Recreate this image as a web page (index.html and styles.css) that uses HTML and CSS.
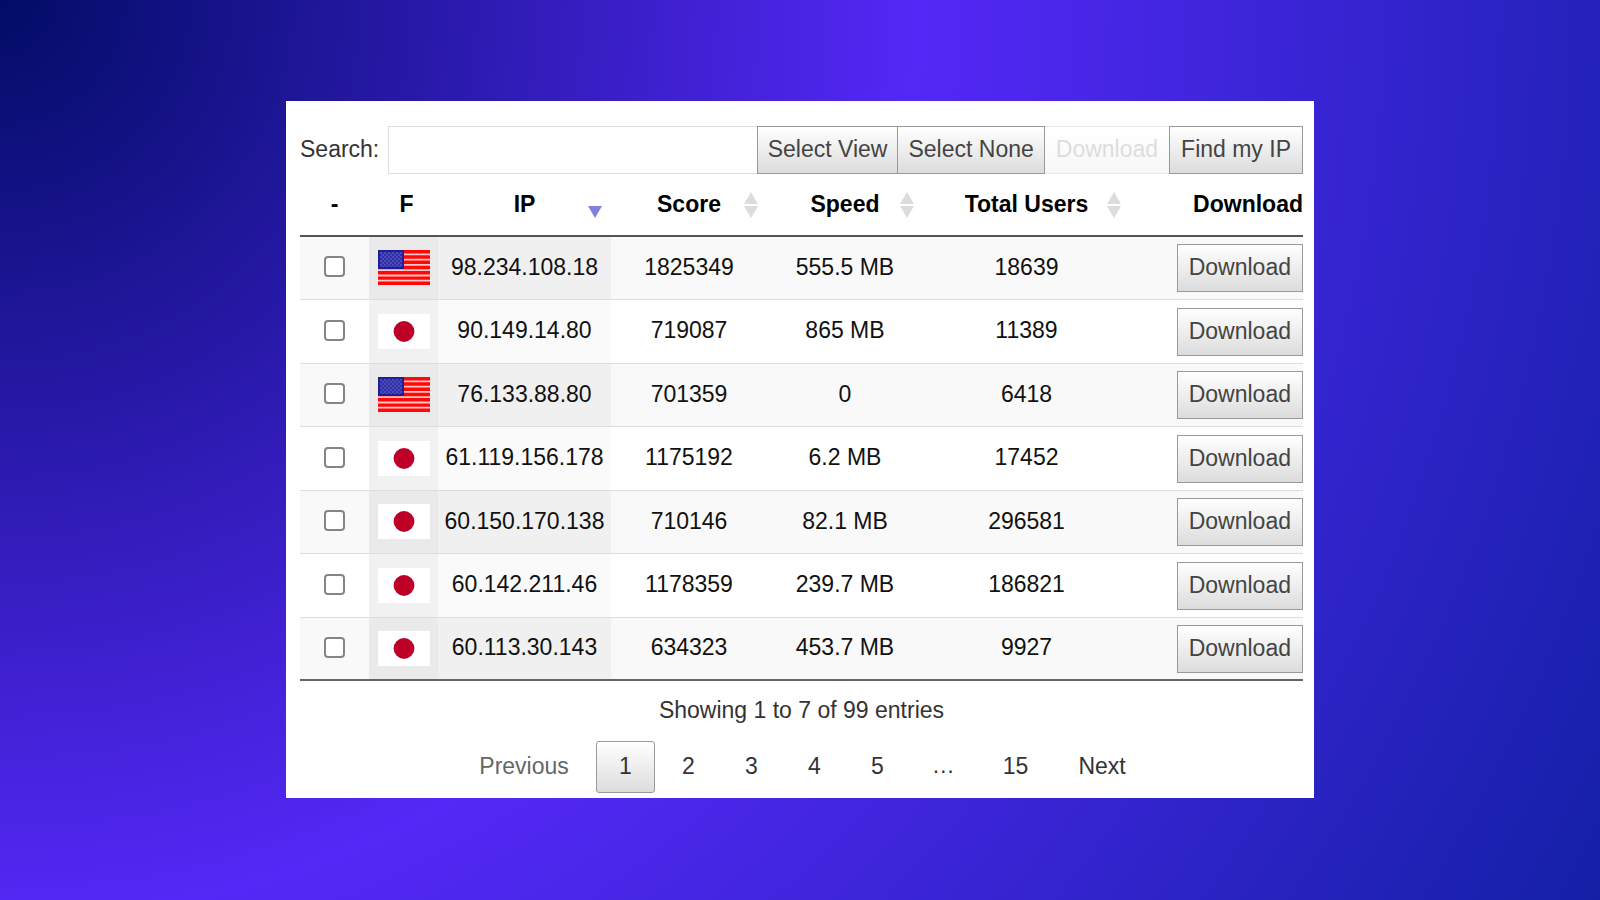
FILE: index.html
```
<!DOCTYPE html>
<html lang="en">
<head>
<meta charset="utf-8">
<title>Server list</title>
<link rel="stylesheet" href="styles.css">
</head>
<body>
<svg class="defs" aria-hidden="true">
  <defs>
    <pattern id="stars" width="4" height="4" patternUnits="userSpaceOnUse">
      <rect width="4" height="4" fill="#2e2ea8"/>
      <rect width="2" height="2" fill="#4c4cb6"/>
      <rect x="2" y="2" width="2" height="2" fill="#4c4cb6"/>
    </pattern>
    <symbol id="flag-us" viewBox="0 0 52 35">
      <rect width="52" height="35" fill="#ffc4c4"/>
      <path d="M0 1.8H52M0 7H52M0 12.3H52M0 17.5H52M0 22.8H52M0 28.1H52M0 33.3H52" stroke="#ff0808" stroke-width="3.4"/>
      <rect width="26" height="19" fill="#1c1c9c"/>
      <rect x="2" y="2" width="22" height="15" fill="url(#stars)"/>
    </symbol>
    <symbol id="flag-jp" viewBox="0 0 52 35">
      <rect width="52" height="35" fill="#fff"/>
      <circle cx="26" cy="17.5" r="10.4" fill="#be0029"/>
    </symbol>
    <symbol id="sort-both" viewBox="0 0 14 26">
      <path d="M7 0L14 12H0ZM0 14H14L7 26Z" fill="#dcdcdc"/>
    </symbol>
    <symbol id="sort-down" viewBox="0 0 14 26">
      <path d="M0 14H14L7 26Z" fill="#8080e0"/>
    </symbol>
  </defs>
</svg>
<main class="card">
  <form class="toolbar">
    <label class="search-label" for="search">Search:</label>
    <input class="search" id="search" type="search">
    <button class="btn btn-select" type="button">Select View</button>
    <button class="btn btn-select btn-joined" type="button">Select None</button>
    <button class="btn" type="button" disabled>Download</button>
    <button class="btn" type="button">Find my IP</button>
  </form>
  <table class="servers">
    <colgroup>
      <col class="col-flag"><col class="col-flag"><col class="col-ip"><col class="col-num"><col class="col-num"><col class="col-users"><col>
    </colgroup>
    <thead>
      <tr>
        <th>-</th>
        <th class="head-flag">F</th>
        <th>IP<svg class="sort"><use href="#sort-down"/></svg></th>
        <th>Score<svg class="sort"><use href="#sort-both"/></svg></th>
        <th>Speed<svg class="sort"><use href="#sort-both"/></svg></th>
        <th>Total Users<svg class="sort"><use href="#sort-both"/></svg></th>
        <th class="action">Download</th>
      </tr>
    </thead>
    <tbody>
      <tr><td><input class="check" type="checkbox" aria-label="Select 98.234.108.18"></td><td class="flag-cell"><svg class="flag"><use href="#flag-us"/></svg></td><td class="ip">98.234.108.18</td><td>1825349</td><td>555.5 MB</td><td>18639</td><td class="action"><button class="btn" type="button">Download</button></td></tr>
      <tr><td><input class="check" type="checkbox" aria-label="Select 90.149.14.80"></td><td class="flag-cell"><svg class="flag"><use href="#flag-jp"/></svg></td><td class="ip">90.149.14.80</td><td>719087</td><td>865 MB</td><td>11389</td><td class="action"><button class="btn" type="button">Download</button></td></tr>
      <tr><td><input class="check" type="checkbox" aria-label="Select 76.133.88.80"></td><td class="flag-cell"><svg class="flag"><use href="#flag-us"/></svg></td><td class="ip">76.133.88.80</td><td>701359</td><td>0</td><td>6418</td><td class="action"><button class="btn" type="button">Download</button></td></tr>
      <tr><td><input class="check" type="checkbox" aria-label="Select 61.119.156.178"></td><td class="flag-cell"><svg class="flag"><use href="#flag-jp"/></svg></td><td class="ip">61.119.156.178</td><td>1175192</td><td>6.2 MB</td><td>17452</td><td class="action"><button class="btn" type="button">Download</button></td></tr>
      <tr><td><input class="check" type="checkbox" aria-label="Select 60.150.170.138"></td><td class="flag-cell"><svg class="flag"><use href="#flag-jp"/></svg></td><td class="ip">60.150.170.138</td><td>710146</td><td>82.1 MB</td><td>296581</td><td class="action"><button class="btn" type="button">Download</button></td></tr>
      <tr><td><input class="check" type="checkbox" aria-label="Select 60.142.211.46"></td><td class="flag-cell"><svg class="flag"><use href="#flag-jp"/></svg></td><td class="ip">60.142.211.46</td><td>1178359</td><td>239.7 MB</td><td>186821</td><td class="action"><button class="btn" type="button">Download</button></td></tr>
      <tr><td><input class="check" type="checkbox" aria-label="Select 60.113.30.143"></td><td class="flag-cell"><svg class="flag"><use href="#flag-jp"/></svg></td><td class="ip">60.113.30.143</td><td>634323</td><td>453.7 MB</td><td>9927</td><td class="action"><button class="btn" type="button">Download</button></td></tr>
    </tbody>
  </table>
  <p class="info">Showing 1 to 7 of 99 entries</p>
  <nav class="pager" aria-label="Pages">
    <a class="page page-off">Previous</a>
    <a class="page page-current" href="#">1</a>
    <a class="page" href="#">2</a>
    <a class="page" href="#">3</a>
    <a class="page" href="#">4</a>
    <a class="page" href="#">5</a>
    <span class="gap">…</span>
    <a class="page" href="#">15</a>
    <a class="page" href="#">Next</a>
  </nav>
</main>
</body>
</html>
```
FILE: styles.css
```
* { box-sizing: border-box; }

body {
  margin: 0;
  min-height: 100vh;
  padding: 101px 286px;
  background: radial-gradient(circle at top left, #020c66, #5428f6 50%, #1320a6);
  font-family: Arial, "Liberation Sans", sans-serif;
  font-size: 23px;
  line-height: 30px;
  color: #333;
}

.defs { position: absolute; width: 0; height: 0; }

.card {
  padding: 25px 11px 5px 14px;
  background: #fff;
}

.toolbar { display: flex; align-items: center; }

.search-label { margin-right: 9px; padding-bottom: 2px; }

.search {
  flex: 1;
  min-width: 0;
  height: 48px;
  padding: 0 8px;
  border: 1px solid #ddd;
  border-right: 0;
  background: #fff;
  font: inherit;
}

.btn {
  height: 48px;
  padding: 0 11px 2px;
  border: 1px solid #999;
  background: linear-gradient(#fff, #dcdcdc);
  color: #444;
  font: inherit;
  white-space: nowrap;
}

.btn-select { padding: 0 10px 2px; }

.btn-joined { border-left: 0; }

.btn:disabled {
  border-color: #e8e8e8;
  border-width: 1px 0;
  background: linear-gradient(#fff, #f7f7f7);
  color: #ddd;
}

.servers {
  width: 100%;
  table-layout: fixed;
  border-spacing: 0;
  border-bottom: 2px solid #666;
  color: #111;
}

.col-flag { width: 69px; }
.col-ip { width: 173px; }
.col-num { width: 156px; }
.col-users { width: 207px; }

th {
  position: relative;
  height: 63px;
  padding: 0 0 2px;
  border-bottom: 2px solid #555;
  color: #000;
}

.head-flag { padding-left: 6px; }

td {
  height: 63px;
  padding: 0 0 3px;
  text-align: center;
  background: #fff;
}

tbody tr:nth-child(even) td { height: 64px; }
tbody tr:first-child td,
tbody tr:last-child td { height: 62px; }
tbody tr + tr td { border-top: 1px solid #ddd; }
tbody tr:nth-child(odd) td { background: #f9f9f9; }

tbody tr .flag-cell { padding-bottom: 2px; background: #f1f1f1; }
tbody tr:nth-child(odd) .flag-cell { background: #eaeaea; }
tbody tr .ip { background: #fafafa; }
tbody tr:nth-child(odd) .ip { background: #f0f0f0; }

th.action, td.action { text-align: right; }
td.action { padding-bottom: 0; }

.sort {
  position: absolute;
  right: 9px;
  top: 18px;
  width: 14px;
  height: 26px;
}

.flag { display: block; width: 52px; height: 35px; margin: 1px auto 0; }

.check {
  appearance: none;
  display: block;
  width: 21px;
  height: 21px;
  margin: 0 auto;
  border: 2px solid #858585;
  border-radius: 4px;
  background: #fff;
}

.check:checked { background: #0075ff; }

.action .btn { display: block; margin-left: auto; }

.info { margin: 14px 0 16px; text-align: center; }

.pager { display: flex; justify-content: center; gap: 4px; padding-left: 2px; }

.page {
  min-width: 59px;
  padding: 9px 22px 11px;
  border: 1px solid transparent;
  border-radius: 3px;
  color: #333;
  text-align: center;
  text-decoration: none;
}

.page-off { color: #666; }

.page-current {
  border-color: #999;
  background: linear-gradient(#fff, #dcdcdc);
}

.gap { padding: 9px 21px 11px; }
```
